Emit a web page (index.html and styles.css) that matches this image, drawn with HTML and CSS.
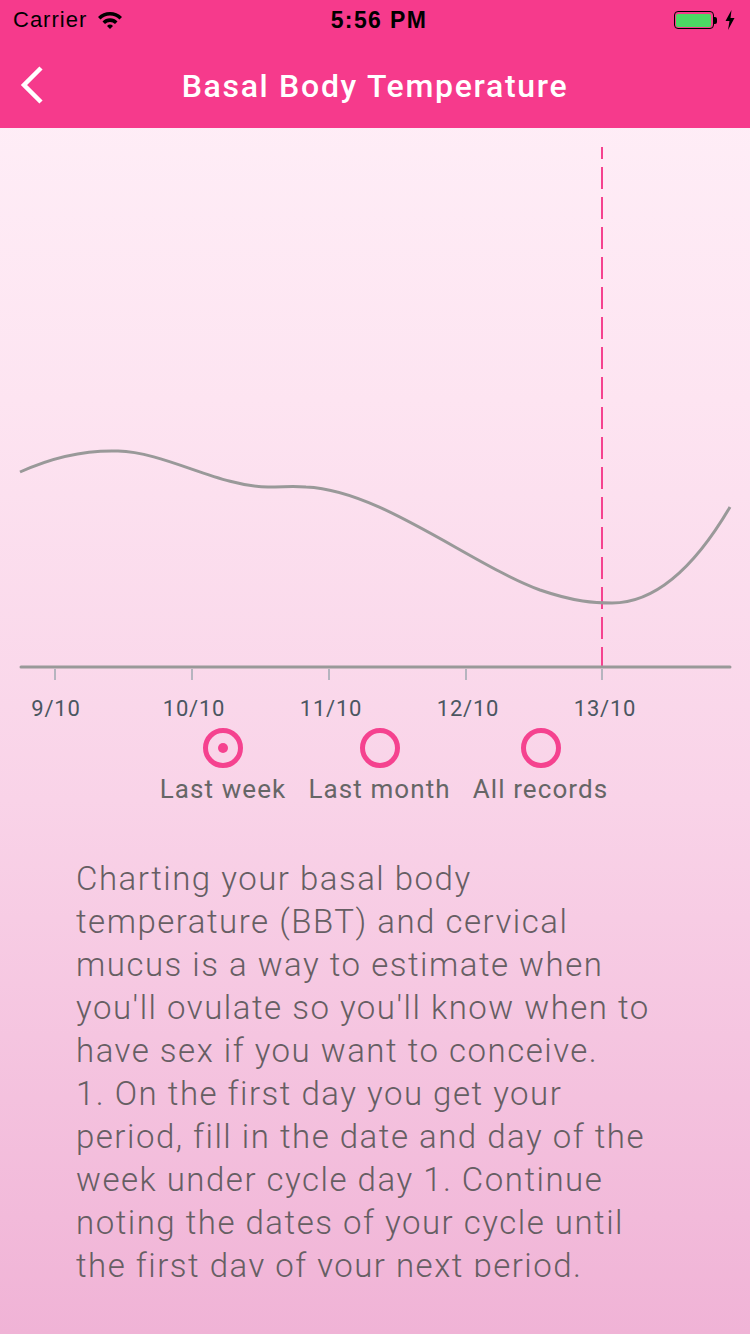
FILE: index.html
```html
<!DOCTYPE html>
<html lang="en">
<head>
  <meta charset="UTF-8" />
  <meta name="viewport" content="width=device-width, initial-scale=1.0"/>
  <title>Basal Body Temperature</title>
  <link rel="stylesheet" href="styles.css">
</head>
<body>
  <header class="topbar">
    <div class="status">
      <div class="status-left">
        <span>Carrier</span>
        <svg class="wifi" width="26" height="20" viewBox="0 0 26 20">
          <path d="M1 7 A17 17 0 0 1 25 7 L22.5 9.5 A13.5 13.5 0 0 0 3.5 9.5 Z" fill="#000"/>
          <path d="M5.5 11.5 A10.5 10.5 0 0 1 20.5 11.5 L18 14 A7 7 0 0 0 8 14 Z" fill="#000"/>
          <path d="M10 16 A4.3 4.3 0 0 1 16 16 L13 19 Z" fill="#000"/>
        </svg>
      </div>
      <div class="status-time">5:56 PM</div>
      <div class="status-right">
        <span class="battery"><span class="battery-fill"></span></span>
        <span class="battery-tip"></span>
        <svg class="bolt" width="10" height="20" viewBox="0 0 10 20">
          <path d="M6.5 0 L0.5 11 L4.5 11 L3 20 L9.5 8 L5.5 8 Z" fill="#000"/>
        </svg>
      </div>
    </div>
    <div class="navbar">
      <svg class="back" width="26" height="40" viewBox="0 0 26 40">
        <path d="M22 3 L5 20 L22 37" fill="none" stroke="#fff" stroke-width="4.5"/>
      </svg>
      <h1>Basal Body Temperature</h1>
    </div>
  </header>

  <main class="page">
    <!-- Biểu đồ nhiệt độ -->
    <svg class="chart" width="750" height="600" viewBox="0 0 750 600">
      <line x1="602" y1="19" x2="602" y2="539" stroke="#f5428f" stroke-width="2" stroke-dasharray="22 8" stroke-dashoffset="10"/>
      <path d="M20,344 C55,328 85,322 118,323 C165,324 220,359 268,359 C285,359 292,358 306,359 C380,362 470,436 540,462 C575,474 595,475 612,475 C660,475 700,430 730,379" fill="none" stroke="#999" stroke-width="3"/>
      <line x1="21" y1="539" x2="730" y2="539" stroke="#999" stroke-width="3" stroke-linecap="round"/>
      <g stroke="#9ea8b0" stroke-width="1.5">
        <line x1="55" y1="541" x2="55" y2="552"/>
        <line x1="192" y1="541" x2="192" y2="552"/>
        <line x1="329" y1="541" x2="329" y2="552"/>
        <line x1="466" y1="541" x2="466" y2="552"/>
        <line x1="602" y1="541" x2="602" y2="552"/>
      </g>
      <g class="dates" text-anchor="middle">
        <text x="56" y="588">9/10</text>
        <text x="194" y="588">10/10</text>
        <text x="331" y="588">11/10</text>
        <text x="468" y="588">12/10</text>
        <text x="605" y="588">13/10</text>
      </g>
    </svg>

    <div class="ranges">
      <label class="range">
        <span class="radio checked"></span>
        <span class="range-name">Last week</span>
      </label>
      <label class="range">
        <span class="radio"></span>
        <span class="range-name">Last month</span>
      </label>
      <label class="range">
        <span class="radio"></span>
        <span class="range-name">All records</span>
      </label>
    </div>

    <div class="info">
      <p>Charting your basal body<br>
      temperature (BBT) and cervical<br>
      mucus is a way to estimate when<br>
      you'll ovulate so you'll know when to<br>
      have sex if you want to conceive.<br>
      1. On the first day you get your<br>
      period, fill in the date and day of the<br>
      week under cycle day 1. Continue<br>
      noting the dates of your cycle until<br>
      the first day of your next period.</p>
    </div>
  </main>
</body>
</html>
```

FILE: styles.css
```css
body {
  margin: 0;
  width: 750px;
  height: 1334px;
  overflow: hidden;
  font-family: Roboto, "Liberation Sans", sans-serif;
  background: linear-gradient(to bottom, #fff1f9 0px, #fde4f1 400px, #f9d3e8 800px, #f0b3d6 1334px);
}
.topbar {
  background-color: #f63a8c;
  height: 128px;
}
.status {
  height: 40px;
  display: flex;
  align-items: center;
  justify-content: space-between;
  padding: 0 15px 0 13px;
  font-family: "Liberation Sans", Arial, sans-serif;
  font-size: 22px;
  color: #000;
}
.status-left {
  display: flex;
  align-items: center;
  gap: 10px;
  width: 180px;
  letter-spacing: 1px;
}
.status-time {
  font-weight: bold;
  font-size: 23px;
  letter-spacing: 1.4px;
  margin-left: 10px;
}
.status-right {
  display: flex;
  align-items: center;
  justify-content: flex-end;
  width: 180px;
}
.battery {
  width: 40px;
  height: 18px;
  border: 1.5px solid #000;
  border-radius: 4px;
  padding: 1.5px;
  box-sizing: border-box;
  display: flex;
}
.battery-fill {
  flex: 1;
  background-color: #4cd964;
  border-radius: 2px;
}
.battery-tip {
  width: 3px;
  height: 7px;
  background-color: #000;
  border-radius: 0 2px 2px 0;
  margin-right: 8px;
}
.navbar {
  height: 88px;
  display: flex;
  align-items: center;
  justify-content: center;
  position: relative;
}
.back {
  position: absolute;
  left: 19px;
  top: 25px;
}
.navbar h1 {
  margin: 4px 0 0;
  color: #fff;
  font-size: 32px;
  font-weight: 500;
  letter-spacing: 1.7px;
}
.chart {
  display: block;
}
.dates text {
  font-family: Roboto, "Liberation Sans", sans-serif;
  font-size: 22px;
  letter-spacing: 0.8px;
  fill: #4b5661;
}
.ranges {
  display: flex;
  justify-content: center;
  gap: 22px;
  padding-left: 18px;
}
.range {
  display: flex;
  flex-direction: column;
  align-items: center;
  gap: 6px;
}
.radio {
  width: 40px;
  height: 40px;
  box-sizing: border-box;
  border: 5px solid #f5428f;
  border-radius: 50%;
  display: flex;
  align-items: center;
  justify-content: center;
}
.radio.checked::after {
  content: "";
  width: 10px;
  height: 10px;
  border-radius: 50%;
  background-color: #f5428f;
}
.range-name {
  font-size: 26px;
  line-height: 30px;
  letter-spacing: 1.1px;
  color: #666;
}
.info {
  margin: 53px 0 0 76px;
  height: 420px;
  overflow: hidden;
}
.info p {
  margin: 0;
  font-size: 33px;
  font-weight: 300;
  line-height: 43px;
  letter-spacing: 1.5px;
  color: #665e63;
  white-space: nowrap;
}
```
